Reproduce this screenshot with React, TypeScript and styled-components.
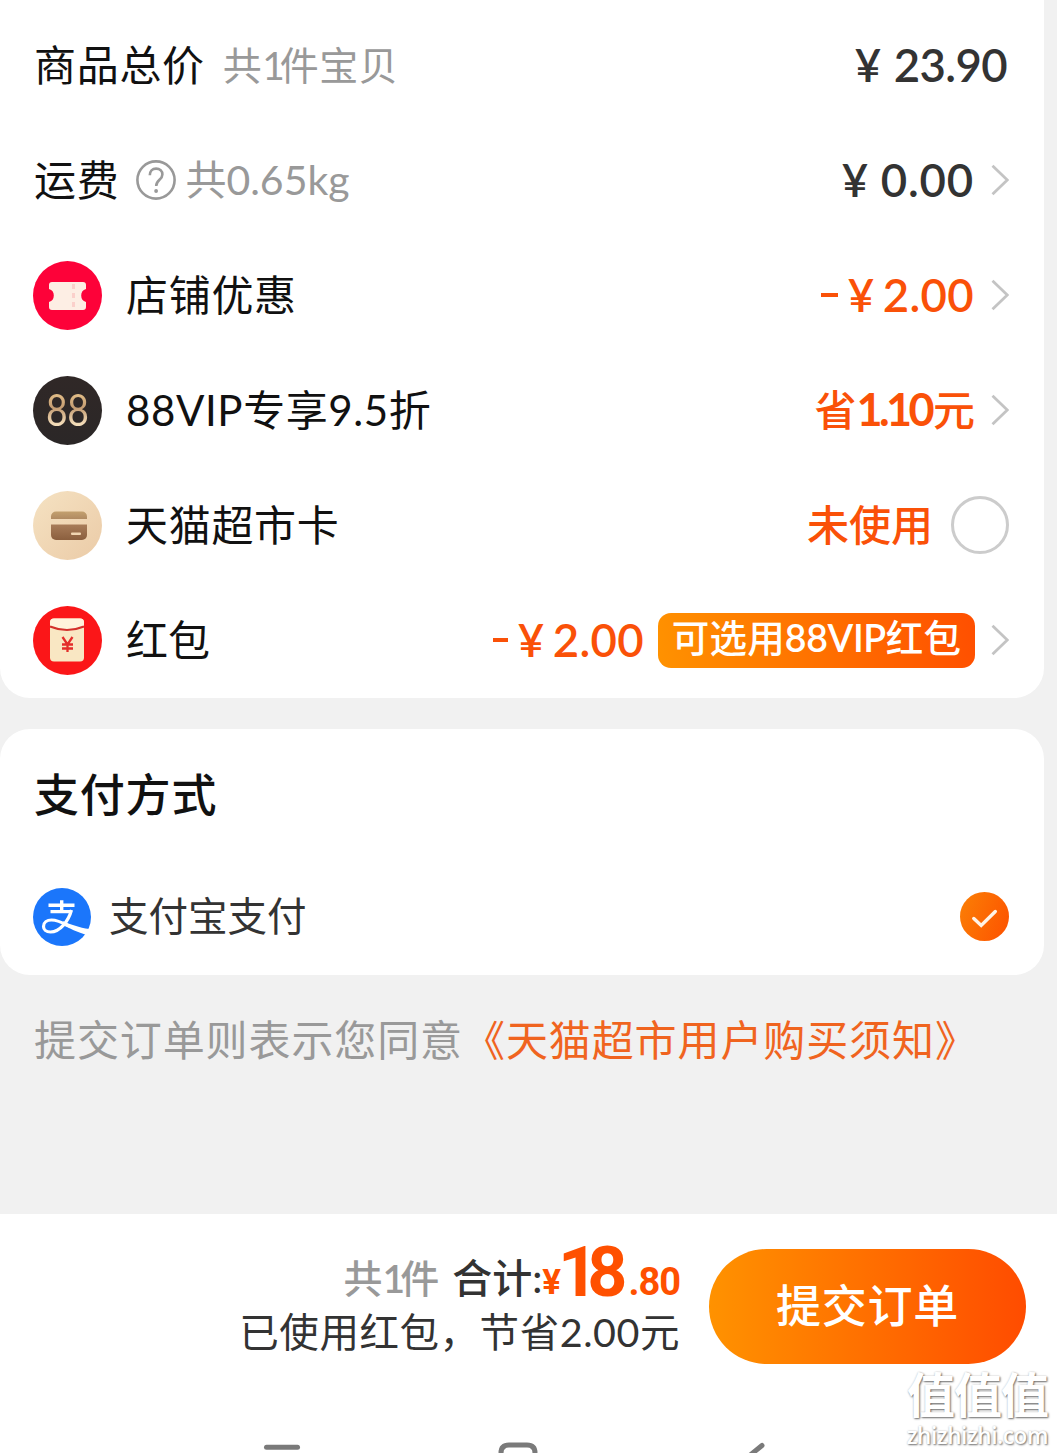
import React from 'react';
import styled, { createGlobalStyle } from 'styled-components';

const Global = createGlobalStyle`
  * { box-sizing: border-box; }
  body {
    margin: 0;
    background: #f1f1f1;
    font-family: Lato, "Noto Sans CJK SC", sans-serif;
    overflow: hidden;
  }
`;

const Page = styled.div`
  display: flex;
  flex-direction: column;
  height: 1453px;
  width: 1057px;
  background: #f1f1f1;
  overflow: hidden;
`;

const Card = styled.section<{ $first?: boolean }>`
  width: 1044px;
  flex: none;
  background: #fff;
  margin-top: ${p => (p.$first ? 0 : 31)}px;
  border-radius: ${p => (p.$first ? '0 0 30px 30px' : '30px')};
  padding: ${p => (p.$first ? '8px 35px 0 33px' : '0 35px 0 33px')};
`;

const Row = styled.div`
  display: flex;
  align-items: center;
  height: 115px;
`;

const Spacer = styled.div`
  flex: 1;
`;

interface TextProps {
  $size: number;
  $color?: string;
  $weight?: number;
  $track?: number;
  $ml?: number;
  $up?: number;
}

const Text = styled.span<TextProps>`
  font-size: ${p => p.$size}px;
  line-height: 60px;
  color: ${p => p.$color ?? '#111'};
  font-weight: ${p => p.$weight ?? 400};
  letter-spacing: ${p => p.$track ?? 0}px;
  margin-left: ${p => p.$ml ?? 0}px;
  padding-bottom: ${p => p.$up ?? 2}px;
  white-space: pre;
`;

const Num = styled.span<{ $track?: number; $weight?: number; $size?: number; $r?: number }>`
  letter-spacing: ${p => p.$track ?? 0}px;
  font-weight: ${p => p.$weight ?? 'inherit'};
  font-size: ${p => (p.$size ? `${p.$size}px` : 'inherit')};
  margin-right: ${p => p.$r ?? 0}px;
`;

const Price = styled.div<{ $color: string }>`
  display: flex;
  align-items: center;
  color: ${p => p.$color};
  font-size: 45.5px;
  font-weight: 600;
  line-height: 60px;
  padding-bottom: 2px;
`;

const Minus = styled.i<{ $w: number }>`
  width: ${p => p.$w}px;
  height: 4px;
  margin-right: 10px;
  background: currentColor;
`;

const Yen = styled.span<{ $gap: number }>`
  width: 26px;
  margin-right: ${p => p.$gap}px;
  text-align: center;
`;

const Amount = styled.span<{ $track?: number; $mr?: number }>`
  letter-spacing: ${p => p.$track ?? 0}px;
  margin-right: ${p => p.$mr ?? 0}px;
`;

const ChevronSvg = styled.svg`
  flex: none;
  width: 18px;
  height: 32px;
  margin: 0 0 1px 16px;
`;

const HelpIcon = styled.svg`
  width: 42px;
  height: 42px;
  margin: 0 0 1px 16px;
`;

const RoundIcon = styled.svg`
  flex: none;
  width: 69px;
  height: 69px;
  margin-right: 24px;
`;

const VipIcon = styled.div`
  flex: none;
  display: flex;
  align-items: center;
  justify-content: center;
  width: 69px;
  height: 69px;
  margin-right: 24px;
  padding-bottom: 3px;
  border-radius: 50%;
  background: linear-gradient(#302827, #2b2727);
  span {
    font-size: 44.5px;
    line-height: 60px;
    font-weight: 400;
    letter-spacing: -0.5px;
    transform: scaleX(0.84);
    background: linear-gradient(#e8c48c 20%, #c49c72 48%, #f3dcb8 75%);
    -webkit-background-clip: text;
    color: transparent;
  }
`;

const Radio = styled.div`
  width: 58px;
  height: 58px;
  margin: 0 0 1px 18px;
  border: 3px solid #ccc;
  border-radius: 50%;
`;

const Badge = styled.div`
  width: 317px;
  height: 55px;
  margin-left: 14px;
  border-radius: 13px;
  background: linear-gradient(80deg, #ff9200, #ff4f00);
  color: #fff;
  font-size: 37.5px;
  font-weight: 500;
  line-height: 49px;
  letter-spacing: 0.2px;
  text-align: center;
  white-space: nowrap;
`;

const Heading = styled.h2`
  margin: 0;
  padding: 36px 0 0 1px;
  height: 130px;
  font-size: 45px;
  line-height: 60px;
  font-weight: 500;
  letter-spacing: 0.8px;
  color: #111;
`;

const PayRow = styled.div`
  display: flex;
  align-items: center;
  height: 116px;
`;

const AlipayIcon = styled.svg`
  width: 58px;
  height: 58px;
`;

const Check = styled.svg`
  width: 49px;
  height: 49px;
  margin-bottom: 1px;
`;

const Agreement = styled.p`
  margin: 35px 0 0 34px;
  height: 60px;
  display: flex;
`;

const Footer = styled.footer`
  position: relative;
  display: flex;
  flex-direction: column;
  justify-content: space-between;
  height: 239px;
  margin-top: auto;
  background: #fff;
`;

const Checkout = styled.div`
  display: flex;
  padding: 35px 31px 0 0;
  justify-content: flex-end;
`;

const Summary = styled.div`
  display: flex;
  flex-direction: column;
  align-items: flex-end;
  margin: -14px 29px 0 0;
`;

const Total = styled.div`
  display: flex;
  align-items: flex-start;
  height: 67px;
`;

const TotalLabel = styled(Text)`
  margin-top: 13px;
`;

const Digits = styled.span<{ $size: number; $top: number; $track?: number; $ml?: number }>`
  font-family: Roboto, sans-serif;
  font-weight: 700;
  color: #ff5000;
  font-size: ${p => p.$size}px;
  line-height: 76px;
  letter-spacing: ${p => p.$track ?? 0}px;
  margin-left: ${p => p.$ml ?? 0}px;
  margin-top: ${p => p.$top}px;
`;

const Submit = styled.button`
  width: 317px;
  height: 115px;
  padding: 0;
  border: 0;
  border-radius: 58px;
  background: linear-gradient(90deg, #ff9200, #ff4c00);
  color: #fff;
  font: 500 45px/115px Lato, "Noto Sans CJK SC", sans-serif;
  letter-spacing: 0.8px;
`;

const NavBar = styled.svg`
  display: block;
  width: 1057px;
  height: 16px;
`;

const Watermark = styled.div`
  position: absolute;
  right: 9px;
  bottom: 3px;
  display: flex;
  flex-direction: column;
  align-items: flex-end;
  color: #fff;
  text-shadow: 1px 1px 2px rgba(0, 0, 0, 0.55), 0 0 2px rgba(0, 0, 0, 0.2);
  white-space: nowrap;
  b {
    font-size: 48px;
    line-height: 54px;
    font-weight: 700;
    letter-spacing: -1px;
  }
  span {
    font: 600 22.5px/28px "Open Sans", sans-serif;
    letter-spacing: -0.4px;
  }
`;

const Chevron = () => (
  <ChevronSvg viewBox="0 0 18 32" fill="none" stroke="#c4c4c4" strokeWidth="2.8">
    <path d="M1.500 1.800 16.300 16 1.500 30.200" />
  </ChevronSvg>
);

const GREY = '#999';
const ORANGE = '#fa5108';

export default function App() {
  return (
    <Page>
      <Global />
      <Card $first>
        <Row>
          <Text $size={42} $track={0.7} $ml={1}>商品总价</Text>
          <Text $size={39} $color={GREY} $ml={18} $track={0.4}>
            共<Num $track={-5}>1</Num>件宝贝
          </Text>
          <Spacer />
          <Price $color="#333">
            <Yen $gap={13}>¥</Yen>
            <Amount $track={-0.6} $mr={2}>23.90</Amount>
          </Price>
        </Row>
        <Row>
          <Text $size={42} $track={0.7} $ml={1}>运费</Text>
          <HelpIcon viewBox="0 0 42 42" fill="none" stroke={GREY} strokeWidth="2.6">
            <circle cx="21" cy="21" r="18.600" />
            <path d="M14.800 16.300c0-4 2.600-6.700 6.300-6.700 3.700 0 6.300 2.500 6.300 5.900 0 5.300-6.200 5.300-6.200 11.500" />
            <circle cx="21.100" cy="32" r="1.900" fill={GREY} stroke="none" />
          </HelpIcon>
          <Text $size={41} $color={GREY} $ml={8}>共0.65kg</Text>
          <Spacer />
          <Price $color="#333">
            <Yen $gap={13}>¥</Yen>
            <Amount $track={0.8} $mr={1}>0.00</Amount>
          </Price>
          <Chevron />
        </Row>
        <Row>
          <RoundIcon viewBox="0 0 69 69">
            <circle cx="34.500" cy="34.500" r="34.500" fill="#fd0239" />
            <path d="M19 21h31a3 3 0 0 1 3 3v4a6.800 6.800 0 0 0 0 13v5a3 3 0 0 1-3 3H19a3 3 0 0 1-3-3v-5a6.800 6.800 0 0 0 0-13v-4a3 3 0 0 1 3-3Z" fill="#fdeee4" />
            <path d="M40.500 23v25" stroke="#fbd0cb" strokeWidth="3" strokeDasharray="5 4" />
          </RoundIcon>
          <Text $size={42} $track={0.7}>店铺优惠</Text>
          <Spacer />
          <Price $color={ORANGE}>
            <Minus $w={17} />
            <Yen $gap={9}>¥</Yen>
            <Amount $track={0.3} $mr={1}>2.00</Amount>
          </Price>
          <Chevron />
        </Row>
        <Row>
          <VipIcon><span>88</span></VipIcon>
          <Text $size={42} $track={0.6}>88VIP专享9.5折</Text>
          <Spacer />
          <Text $size={42} $weight={500} $color={ORANGE}>
            省<Num $r={2} $track={-3.6} $weight={700} $size={45}>1.10</Num>元
          </Text>
          <Chevron />
        </Row>
        <Row>
          <RoundIcon viewBox="0 0 69 69">
            <defs>
              <linearGradient id="sand" x1="0" y1="0" x2="1" y2="1">
                <stop offset="0" stopColor="#f5e2c2" />
                <stop offset="1" stopColor="#ebcba7" />
              </linearGradient>
              <linearGradient id="cardTop" x1="0" y1="0" x2="0" y2="1">
                <stop offset="0" stopColor="#c3a06e" />
                <stop offset="1" stopColor="#b08a62" />
              </linearGradient>
              <linearGradient id="cardBody" x1="0" y1="0" x2="0" y2="1">
                <stop offset="0" stopColor="#a87c59" />
                <stop offset="1" stopColor="#8b5f3e" />
              </linearGradient>
            </defs>
            <circle cx="34.500" cy="34.500" r="34.500" fill="url(#sand)" />
            <path d="M23 20.500h26a5 5 0 0 1 5 5V28H18v-2.500a5 5 0 0 1 5-5Z" fill="url(#cardTop)" />
            <path d="M18 33.500h36V44a5 5 0 0 1-5 5H23a5 5 0 0 1-5-5Z" fill="url(#cardBody)" />
            <rect x="38" y="41.500" width="10" height="2.600" rx="1" fill="#f0d5b2" />
          </RoundIcon>
          <Text $size={42} $track={0.7}>天猫超市卡</Text>
          <Spacer />
          <Text $size={42} $weight={500} $color={ORANGE}>未使用</Text>
          <Radio />
        </Row>
        <Row>
          <RoundIcon viewBox="0 0 69 69">
            <circle cx="34.500" cy="34.500" r="34.500" fill="#fb1618" />
            <rect x="17" y="12.500" width="34" height="43" rx="4" fill="#f9e7c3" />
            <path d="M17 20v-3.500a4 4 0 0 1 4-4h26a4 4 0 0 1 4 4V20Q34 27 17 20Z" fill="#fff3dc" />
            <path d="M17 20.500Q34 27.500 51 20.500" stroke="#d3302c" strokeWidth="2.200" fill="none" />
            <path d="m29.500 31 5 7.500 5-7.500M34.500 38.500V46M29 38.500h11M29 42.500h11" stroke="#e32e2b" strokeWidth="2.300" fill="none" />
          </RoundIcon>
          <Text $size={42}>红包</Text>
          <Spacer />
          <Price $color={ORANGE}>
            <Minus $w={15} />
            <Yen $gap={9}>¥</Yen>
            <Amount $track={0.3}>2.00</Amount>
          </Price>
          <Badge>可选用<Num $weight={600} $track={-0.4}>88VIP</Num>红包</Badge>
          <Chevron />
        </Row>
      </Card>

      <Card>
        <Heading>支付方式</Heading>
        <PayRow>
          <AlipayIcon viewBox="0 0 58 58" fill="none" stroke="#fff">
            <circle cx="29" cy="29" r="29" fill="#1b76fb" stroke="none" />
            <path d="M15.500 17.300h26M28.700 12.300v11.500M17.500 23.600h20.500" strokeWidth="3.400" />
            <path d="M38.500 22C35.500 33 27 44 17.500 44c-4.500 0-7-2.500-7-5.500 0-4 3.500-6.500 8-6.500 7 0 12 3.200 19 6.800" strokeWidth="3.200" />
            <path d="M30 33.300C38 36.500 46 39.800 56.300 41L52.800 46.800C44 44 37 40.500 29.500 37Z" fill="#fff" stroke="none" />
          </AlipayIcon>
          <Text $size={39.5} $color="#333" $ml={18}>支付宝支付</Text>
          <Spacer />
          <Check viewBox="0 0 49 49" fill="none">
            <defs>
              <linearGradient id="tick" x1="0" y1="0.300" x2="1" y2="0.700">
                <stop offset="0" stopColor="#fb7c05" />
                <stop offset="1" stopColor="#fd5500" />
              </linearGradient>
            </defs>
            <circle cx="24.500" cy="24.500" r="24.500" fill="url(#tick)" />
            <path d="m13.800 26.500 7.400 7L35.300 19.500" stroke="#fff3e6" strokeWidth="3.400" strokeLinecap="round" />
          </Check>
        </PayRow>
      </Card>

      <Agreement>
        <Text $size={42} $color={GREY} $track={0.9}>提交订单则表示您同意</Text>
        <Text $size={42} $color="#f0641f" $track={0.9}>《天猫超市用户购买须知》</Text>
      </Agreement>

      <Footer>
        <Checkout>
          <Summary>
            <Total>
              <TotalLabel $size={39} $color={GREY} $weight={500}>
                共<Num $track={-5} $weight={600}>1</Num>件
              </TotalLabel>
              <TotalLabel $size={40} $color="#333" $weight={500} $ml={13}>合计:</TotalLabel>
              <Digits $size={35} $top={9.5} $track={-3}>¥</Digits>
              <Digits $size={70} $top={-1.5} $track={-11}>18</Digits>
              <Digits $size={38} $top={8.5} $track={-1} $ml={12}>.80</Digits>
            </Total>
            <Text $size={39.5} $color="#333" $track={0.55}>已使用红包，节省2.00元</Text>
          </Summary>
          <Submit>提交订单</Submit>
        </Checkout>
        <NavBar viewBox="0 0 1057 16" fill="none" stroke="#7a7a7a" strokeWidth="5" strokeLinecap="round">
          <path d="M266.500 10.300h31" />
          <path d="M501 20v-4q0-8 8-8h18q8 0 8 8v4" />
          <path d="m762 8.500-16 13" />
        </NavBar>
        <Watermark>
          <b>值值值</b>
          <span>zhizhizhi.com</span>
        </Watermark>
      </Footer>
    </Page>
  );
}
